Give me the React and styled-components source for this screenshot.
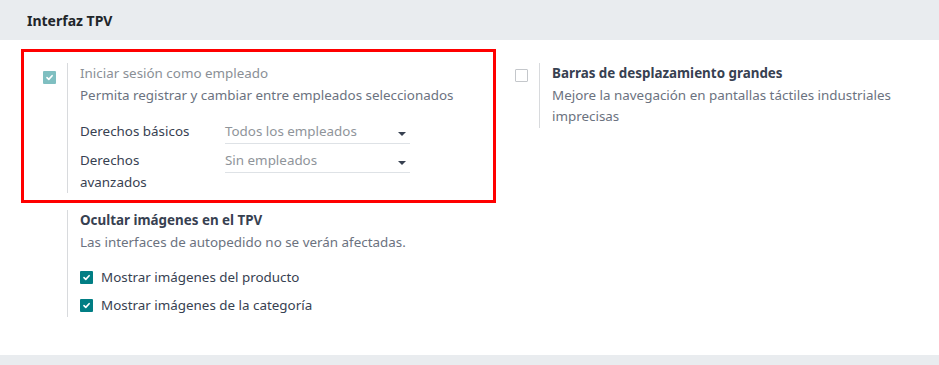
import React from "react";
import styled, { createGlobalStyle } from "styled-components";

const GlobalStyle = createGlobalStyle`
  body {
    margin: 0;
    background: #fff;
    font-family: "Noto Sans", "Open Sans", sans-serif;
    font-size: 13.4px;
    color: #374151;
  }
`;

const Page = styled.div`
  width: 939px;
  height: 365px;
  display: flex;
  flex-direction: column;
  background: #fff;
`;

const Header = styled.div`
  height: 40px;
  background: #e9ecef;
  display: flex;
  align-items: center;
  padding-left: 27px;
  font-weight: 700;
  font-size: 14px;
  color: #212529;
`;

const Grid = styled.div`
  flex: 1;
  display: grid;
  grid-template-columns: 472px 1fr;
  align-content: start;
  align-items: start;
  padding: 9px 0 0 21px;
  row-gap: 5px;
`;

const SettingBox = styled.div`
  display: flex;
  border: 3px solid ${(p) => (p.highlight ? "#ff0000" : "transparent")};
  border-top-width: ${(p) => (p.flush ? "0" : "3px")};
  margin-right: ${(p) => (p.highlight ? "-3px" : "0")};
  padding: ${(p) => (p.flush ? "3px 0 10px" : "12px 0 7px")};
`;

const LeftPane = styled.div`
  width: 43px;
  flex-shrink: 0;
  padding: 4px 0 0 19px;
  box-sizing: border-box;
`;

const RightPane = styled.div`
  border-left: 1px solid #d8dadd;
  padding-left: 12px;
  line-height: 21.5px;
  margin-top: -1px;
`;

const Box = styled.span`
  display: inline-flex;
  align-items: center;
  justify-content: center;
  width: 13px;
  height: 13px;
  box-sizing: border-box;
  border-radius: 1px;
  background: ${(p) => (p.checked ? (p.disabled ? "#7fbfc1" : "#017e84") : "#fff")};
  border: 1px solid ${(p) => (p.checked ? "transparent" : "#c4c7cb")};
  flex-shrink: 0;
`;

const Check = ({ checked, disabled }) => (
  <Box checked={checked} disabled={disabled}>
    {checked && (
      <svg width="9" height="9" viewBox="0 0 10 10">
        <path d="M2.2 5.2 L4.2 7.1 L7.9 3" fill="none" stroke="#fff" strokeWidth="1.8" strokeLinecap="round" strokeLinejoin="round" />
      </svg>
    )}
  </Box>
);

const Title = styled.div`
  font-weight: ${(p) => (p.muted ? 400 : 700)};
  color: ${(p) => (p.muted ? "#8a8f96" : "#374151")};
`;

const Desc = styled.div`
  color: #6b7280;
`;

const FieldTable = styled.div`
  display: grid;
  grid-template-columns: 145px 185px;
  margin-top: 15px;
  row-gap: 6px;
`;

const FieldLabel = styled.div`
  color: #374151;
  width: 122px;
`;

const Select = styled.div`
  display: flex;
  justify-content: space-between;
  align-items: flex-start;
  height: 23px;
  border-bottom: 1px solid #dee2e6;
  color: #8f949a;
  box-sizing: border-box;
`;

const Caret = styled.span`
  width: 0;
  height: 0;
  margin: 11px 4px 0 0;
  border-left: 4px solid transparent;
  border-right: 4px solid transparent;
  border-top: 4px solid #374151;
`;

const OptionList = styled.div`
  margin-top: 14px;
  display: flex;
  flex-direction: column;
  gap: 6.5px;
`;

const OptionRow = styled.label`
  display: flex;
  align-items: center;
  gap: 8px;
  color: #374151;
`;

const Footer = styled.div`
  height: 10px;
  background: #e9ecef;
`;

export default function App() {
  return (
    <Page>
      <GlobalStyle />
      <Header>Interfaz TPV</Header>
      <Grid>
        <SettingBox highlight>
          <LeftPane>
            <Check checked disabled />
          </LeftPane>
          <RightPane>
            <Title muted>Iniciar sesión como empleado</Title>
            <Desc>Permita registrar y cambiar entre empleados seleccionados</Desc>
            <FieldTable>
              <FieldLabel>Derechos básicos</FieldLabel>
              <Select>
                Todos los empleados
                <Caret />
              </Select>
              <FieldLabel>Derechos avanzados</FieldLabel>
              <Select>
                Sin empleados
                <Caret />
              </Select>
            </FieldTable>
          </RightPane>
        </SettingBox>
        <SettingBox>
          <LeftPane>
            <Check />
          </LeftPane>
          <RightPane>
            <Title>Barras de desplazamiento grandes</Title>
            <Desc>
              Mejore la navegación en pantallas táctiles industriales
              <br />
              imprecisas
            </Desc>
          </RightPane>
        </SettingBox>
        <SettingBox flush>
          <LeftPane />
          <RightPane>
            <Title>Ocultar imágenes en el TPV</Title>
            <Desc>Las interfaces de autopedido no se verán afectadas.</Desc>
            <OptionList>
              <OptionRow>
                <Check checked />
                Mostrar imágenes del producto
              </OptionRow>
              <OptionRow>
                <Check checked />
                Mostrar imágenes de la categoría
              </OptionRow>
            </OptionList>
          </RightPane>
        </SettingBox>
      </Grid>
      <Footer />
    </Page>
  );
}
